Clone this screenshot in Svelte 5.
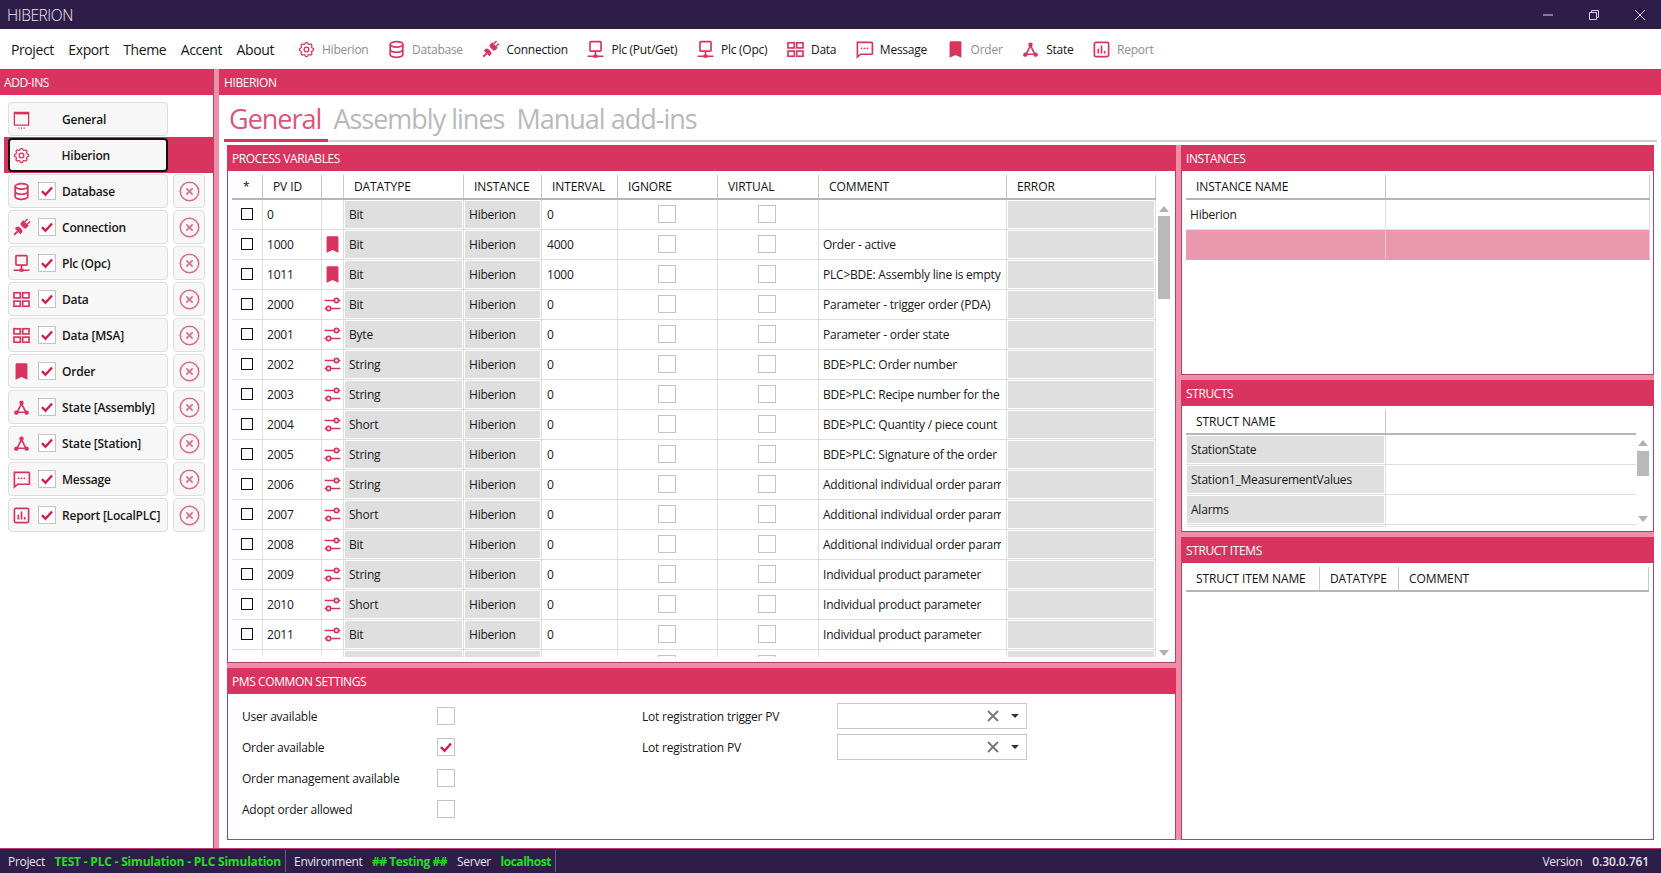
<script>
  const menus = ['Project', 'Export', 'Theme', 'Accent', 'About'];
  const tools = [
    ['gear', 'Hiberion', true], ['db', 'Database', true], ['plug', 'Connection', false],
    ['pc', 'Plc (Put/Get)', false], ['pc', 'Plc (Opc)', false], ['grid', 'Data', false],
    ['msg', 'Message', false], ['mark', 'Order', true], ['state', 'State', false], ['chart', 'Report', true]
  ];
  const addins = [
    ['screen', 'General', false], ['gear', 'Hiberion', false], ['db', 'Database', true],
    ['plug', 'Connection', true], ['pc', 'Plc (Opc)', true], ['grid', 'Data', true],
    ['grid', 'Data [MSA]', true], ['mark', 'Order', true], ['state', 'State [Assembly]', true],
    ['state', 'State [Station]', true], ['msg', 'Message', true], ['chart', 'Report [LocalPLC]', true]
  ];
  const add = 'Additional individual order parameter';
  const ind = 'Individual product parameter';
  const rows = [
    ['0', '', 'Bit', '0', ''],
    ['1000', 'mark', 'Bit', '4000', 'Order - active'],
    ['1011', 'mark', 'Bit', '1000', 'PLC>BDE: Assembly line is empty'],
    ['2000', 'sliders', 'Bit', '0', 'Parameter - trigger order (PDA)'],
    ['2001', 'sliders', 'Byte', '0', 'Parameter - order state'],
    ['2002', 'sliders', 'String', '0', 'BDE>PLC: Order number'],
    ['2003', 'sliders', 'String', '0', 'BDE>PLC: Recipe number for the order'],
    ['2004', 'sliders', 'Short', '0', 'BDE>PLC: Quantity / piece count'],
    ['2005', 'sliders', 'String', '0', 'BDE>PLC: Signature of the order'],
    ['2006', 'sliders', 'String', '0', add],
    ['2007', 'sliders', 'Short', '0', add],
    ['2008', 'sliders', 'Bit', '0', add],
    ['2009', 'sliders', 'String', '0', ind],
    ['2010', 'sliders', 'Short', '0', ind],
    ['2011', 'sliders', 'Bit', '0', ind],
    ['', 'sliders', '', '', '']
  ];
  const headers = ['*', 'PV ID', '', 'DATATYPE', 'INSTANCE', 'INTERVAL', 'IGNORE', 'VIRTUAL', 'COMMENT', 'ERROR'];
  const structs = ['StationState', 'Station1_MeasurementValues', 'Alarms', ''];
  const settings = [
    ['User available', false], ['Order available', true],
    ['Order management available', false], ['Adopt order allowed', false]
  ];
</script>

{#snippet icon(name)}
  <svg class="icon" viewBox="0 0 24 24" aria-hidden="true">
    {#if name === 'gear'}
      <path class="s" d="M10.325 4.317c.426 -1.756 2.924 -1.756 3.35 0a1.724 1.724 0 0 0 2.573 1.066c1.543 -.94 3.31 .826 2.37 2.37a1.724 1.724 0 0 0 1.065 2.572c1.756 .426 1.756 2.924 0 3.35a1.724 1.724 0 0 0 -1.066 2.573c.94 1.543 -.826 3.31 -2.37 2.37a1.724 1.724 0 0 0 -2.572 1.065c-.426 1.756 -2.924 1.756 -3.35 0a1.724 1.724 0 0 0 -2.573 -1.066c-1.543 .94 -3.31 -.826 -2.37 -2.37a1.724 1.724 0 0 0 -1.065 -2.572c-1.756 -.426 -1.756 -2.924 0 -3.35a1.724 1.724 0 0 0 1.066 -2.573c-.94 -1.543 .826 -3.31 2.37 -2.37c1 .608 2.296 .07 2.572 -1.065z"/>
      <circle class="s" cx="12" cy="12" r="3"/>
    {:else if name === 'db'}
      <ellipse class="s w" cx="12" cy="5.5" rx="8" ry="3.5"/>
      <path class="s w" d="M4 5.5v13c0 1.9 3.6 3.5 8 3.5s8-1.6 8-3.5v-13M4 12c0 1.9 3.6 3.5 8 3.5s8-1.6 8-3.5"/>
    {:else if name === 'plug'}
      <g class="f" transform="rotate(45 12 12)">
        <rect x="8.8" y="-1" width="1.9" height="5"/><rect x="13.3" y="-1" width="1.9" height="5"/>
        <path d="M7 4h10v3.5a3 3 0 0 1-3 3h-4a3 3 0 0 1-3-3z"/>
        <path d="M7 19v-2.5a3 3 0 0 1 3-3h4a3 3 0 0 1 3 3V19z"/>
        <rect x="10.8" y="19" width="2.4" height="6"/>
      </g>
    {:else if name === 'pc'}
      <rect class="s w" x="5" y="2" width="14" height="12" rx="1"/>
      <path class="s w" d="M12 14v6M2 20.5h20"/><rect class="f" x="9.5" y="18.5" width="5" height="4"/>
    {:else if name === 'grid'}
      <rect class="s w" x="2.5" y="3.5" width="8" height="6.5"/><rect class="s w" x="13.5" y="3.5" width="8" height="6.5"/>
      <rect class="s w" x="2.5" y="14" width="8" height="6.5"/><rect class="s w" x="13.5" y="14" width="8" height="6.5"/>
    {:else if name === 'msg'}
      <path class="s w" d="M3 3h18a1 1 0 0 1 1 1v13a1 1 0 0 1-1 1H7l-4 3.5z"/>
      <circle class="f" cx="8.5" cy="10.5" r="1.1"/><circle class="f" cx="12" cy="10.5" r="1.1"/><circle class="f" cx="15.5" cy="10.5" r="1.1"/>
    {:else if name === 'mark'}
      <path class="f" d="M6 1.5h12a1.5 1.5 0 0 1 1.5 1.5v19.5L12 19l-7.5 3.5V3A1.5 1.5 0 0 1 6 1.5z"/>
    {:else if name === 'state'}
      <path class="s w" d="M12 7 6.5 18h11z"/>
      <circle class="f" cx="12" cy="6" r="2.8"/><circle class="f" cx="5.5" cy="18.5" r="2.8"/><circle class="f" cx="18.5" cy="18.5" r="2.8"/>
    {:else if name === 'chart'}
      <rect class="s w" x="3" y="3" width="18" height="18" rx="2"/>
      <path class="s w" d="M8 17v-6M12 17V7M16 17v-3"/>
    {:else if name === 'sliders'}
      <path class="s w" d="M2 7h12M20 7h2M2 17h2M10 17h12"/>
      <circle class="s w" cx="17" cy="7" r="2.7"/><circle class="s w" cx="7" cy="17" r="2.7"/>
    {:else if name === 'screen'}
      <path class="s" d="M3 3h18v16H3z"/><path class="s w" d="M3 4.5h18"/>
      <path class="s" d="M8 23h1.5M11.3 23h1.5M14.6 23h1.5"/>
    {/if}
  </svg>
{/snippet}

{#snippet check(on, cls)}
  <span class="check {cls}">
    {#if on}
      <svg viewBox="0 0 16 16" aria-hidden="true"><path d="M3 8.2 6.5 11.8 13 4.5"/></svg>
    {/if}
  </span>
{/snippet}

<div class="app">
  <header class="title">
    <span class="title-text">HIBERION</span>
    <div class="win">
      <svg viewBox="0 0 10 10" aria-hidden="true"><path d="M0 5h10"/></svg>
      <svg viewBox="0 0 10 10" aria-hidden="true"><path d="M.5 2.5h7v7h-7zM2.5 2.5v-2h7v7h-2"/></svg>
      <svg viewBox="0 0 10 10" aria-hidden="true"><path d="M0 0l10 10M10 0 0 10"/></svg>
    </div>
  </header>

  <nav class="menu">
    <div class="menus">
      {#each menus as m}<span>{m}</span>{/each}
    </div>
    <div class="tools">
      {#each tools as [ic, label, off]}
        <span class="tool" class:off>{@render icon(ic)}<span>{label}</span></span>
      {/each}
    </div>
  </nav>

  <div class="body">
    <aside class="side">
      <div class="bar">ADD-INS</div>
      <div class="addins">
        {#each addins as [ic, label, removable]}
          <div class="addin" class:active={label === 'Hiberion'}>
            <div class="btn">
              <span class="btn-icon">{@render icon(ic)}</span>
              <span class="btn-check">{#if removable}{@render check(true, '')}{/if}</span>
              <span class="btn-label">{label}</span>
            </div>
            {#if removable}
              <div class="remove">
                <svg viewBox="0 0 20 20" aria-hidden="true"><circle cx="10" cy="10" r="8.8"/><path d="M7 7l6 6M13 7l-6 6"/></svg>
              </div>
            {/if}
          </div>
        {/each}
      </div>
    </aside>
    <div class="splitter"></div>
    <main class="main">
      <div class="bar">HIBERION</div>
      <div class="tabs">
        <span class="tab current">General</span>
        <span class="tab">Assembly lines</span>
        <span class="tab">Manual add-ins</span>
      </div>
      <div class="work">
        <div class="col-left">
          <section class="panel">
            <div class="bar">PROCESS VARIABLES</div>
            <div class="pane pv-pane">
              <div class="pv-table">
                <div class="pv-grid head">
                  {#each headers as h, i}<div class="hcell" class:star={i === 0}>{h}</div>{/each}
                </div>
                <div class="pv-rows">
                  {#each rows as [id, ic, type, interval, comment]}
                    <div class="pv-grid row">
                      <div class="cell center">{@render check(false, 'black')}</div>
                      <div class="cell txt">{id}</div>
                      <div class="cell center mini">{#if ic}{@render icon(ic)}{/if}</div>
                      <div class="cell"><div class="fill">{type}</div></div>
                      <div class="cell"><div class="fill">{id ? 'Hiberion' : ''}</div></div>
                      <div class="cell txt intv">{interval}</div>
                      <div class="cell center nudge">{@render check(false, '')}</div>
                      <div class="cell center nudge">{@render check(false, '')}</div>
                      <div class="cell txt"><div class="clip">{comment}</div></div>
                      <div class="cell"><div class="fill"></div></div>
                    </div>
                  {/each}
                </div>
              </div>
              <div class="scroll pv-scroll">
                <i class="up"></i><b></b><i class="down"></i>
              </div>
            </div>
          </section>
          <section class="panel">
            <div class="bar">PMS COMMON SETTINGS</div>
            <div class="pane pms">
              <div class="pms-left">
                {#each settings as [label, on]}
                  <div class="pms-row"><span>{label}</span>{@render check(on, '')}</div>
                {/each}
              </div>
              <div class="pms-right">
                {#each ['Lot registration trigger PV', 'Lot registration PV'] as label}
                  <div class="pms-row2">
                    <span>{label}</span>
                    <div class="combo">
                      <svg class="clear" viewBox="0 0 12 12" aria-hidden="true"><path d="M1 1l10 10M11 1 1 11"/></svg>
                      <i class="caret"></i>
                    </div>
                  </div>
                {/each}
              </div>
            </div>
          </section>
        </div>
        <div class="col-right">
          <section class="panel">
            <div class="bar">INSTANCES</div>
            <div class="pane side-pane">
              <div class="two w464 head"><div class="hcell">INSTANCE NAME</div><div class="hcell"></div></div>
              <div class="two w464 row"><div class="cell txt">Hiberion</div><div class="cell"></div></div>
              <div class="two w464 row selected"><div class="cell"></div><div class="cell"></div></div>
            </div>
          </section>
          <section class="panel">
            <div class="bar">STRUCTS</div>
            <div class="pane side-pane struct-pane">
              <div class="struct-table">
                <div class="two head"><div class="hcell">STRUCT NAME</div><div class="hcell none"></div></div>
                <div class="struct-rows">
                  {#each structs as s}
                    <div class="two row"><div class="cell"><div class="fill">{s}</div></div><div class="cell none"></div></div>
                  {/each}
                </div>
              </div>
              <div class="scroll struct-scroll"><i class="up"></i><b></b><i class="down"></i></div>
            </div>
          </section>
          <section class="panel">
            <div class="bar">STRUCT ITEMS</div>
            <div class="pane side-pane">
              <div class="three head">
                <div class="hcell">STRUCT ITEM NAME</div><div class="hcell">DATATYPE</div><div class="hcell">COMMENT</div>
              </div>
            </div>
          </section>
        </div>
      </div>
    </main>
  </div>

  <footer class="status">
    <span>Project</span><em class="wide">TEST - PLC - Simulation - PLC Simulation</em>
    <span class="sep"></span>
    <span>Environment</span><em>## Testing ##</em>
    <span>Server</span><em>localhost</em>
    <span class="sep"></span>
    <span class="version">Version</span><strong>0.30.0.761</strong>
  </footer>
</div>

<style>
  :global(body) { margin: 0; background: #fff; }
  .app {
    --accent: #d8345f;
    --pink: #ee8fa8;
    --edge: #b63f68;
    --ink: #161616;
    width: 1661px; height: 873px; overflow: hidden;
    display: flex; flex-direction: column;
    font-family: "Open Sans", "Noto Sans", sans-serif;
    font-size: 12px; color: var(--ink); letter-spacing: -0.22px;
  }
  .icon { width: 100%; height: 100%; display: block; }
  .s { fill: none; stroke: var(--accent); stroke-width: 1.6; }
  .w { stroke-width: 2.1; }
  .f { fill: var(--accent); stroke: none; }

  .title {
    height: 29px; flex: none; background: #2d1d48; color: #f0ebf5;
    display: flex; align-items: center; justify-content: space-between;
    padding: 0 16px 0 7px;
  }
  .title-text { font-size: 15.5px; font-weight: 300; letter-spacing: -0.45px; }
  .win { display: flex; gap: 36px; }
  .win svg { width: 10px; height: 10px; fill: none; stroke: #ddd2ee; stroke-width: 1; }

  .menu { height: 40px; flex: none; display: flex; align-items: center; background: #fff; }
  .menus { display: flex; gap: 14.5px; padding-left: 11px; font-size: 14px; width: 297px; box-sizing: border-box; letter-spacing: -0.4px; }
  .tools { display: flex; gap: 18.6px; letter-spacing: -0.25px; }
  .tool { display: flex; align-items: center; gap: 6px; font-size: 12px; }
  .tool :global(.icon) { width: 19px; height: 19px; }
  .tool.off span { color: #8e8e8e; }

  .body { flex: 1; min-height: 0; display: flex; }
  .bar {
    height: 26px; flex: none; background: var(--accent); color: #fff;
    display: flex; align-items: center; padding-left: 5px; font-size: 12px;
    letter-spacing: -0.4px; box-sizing: border-box; font-weight: 400;
  }
  .side { width: 213px; flex: none; display: flex; flex-direction: column; }
  .side > .bar { padding-left: 4px; }
  .splitter { width: 6px; flex: none; box-sizing: border-box; background: var(--pink); border: solid var(--edge); border-width: 0 0 0 1px; }
  .addins { padding-top: 7px; display: flex; flex-direction: column; gap: 2px; font-weight: 600; }
  .addin { display: flex; gap: 5px; margin-left: 8px; height: 34px; width: 197px; }
  .addin.active {
    margin: -1px 0 -1px 4px; padding: 1px 0 1px 4px; width: 205px;
    background: var(--accent); box-sizing: content-box;
  }
  .btn {
    width: 160px; box-sizing: border-box; background: #f7f7f7; border: 1px solid #dedede;
    border-radius: 4px; display: grid; grid-template-columns: 29px 24px 1fr; align-items: center;
  }
  .active .btn { border: 2.5px solid #111; grid-template-columns: 27.5px 24px 1fr; }
  .btn-icon { width: 19px; height: 19px; margin-left: 3px; }
  .active .btn-icon { margin-left: 1.5px; }
  .btn-check { display: flex; height: 18px; }
  .remove {
    width: 32px; box-sizing: border-box; background: #f7f7f7; border: 1px solid #dedede; border-radius: 4px;
    display: flex; align-items: center; justify-content: center;
  }
  .remove svg { width: 21px; height: 21px; fill: none; stroke: #de6a8a; stroke-width: 1.5; }
  .check {
    width: 18px; height: 18px; box-sizing: border-box; background: #fff; border: 1px solid #c4c4c4;
    display: inline-block; flex: none;
  }
  .check svg { width: 16px; height: 16px; display: block; fill: none; stroke: #cf1f52; stroke-width: 2.4; }
  .check.black { width: 12px; height: 12px; border: 1.3px solid #111; }

  .main { flex: 1; min-width: 0; display: flex; flex-direction: column; }
  .tabs {
    height: 47px; flex: none; box-sizing: border-box; margin: 0 4px 0 5px;
    border-bottom: 2px solid #cfcfcf; display: flex; align-items: flex-end;
    font-size: 27px; color: #b9b9b9; letter-spacing: -1px;
  }
  .tab { height: 47px; box-sizing: border-box; margin-bottom: -2px; padding: 3px 7px 0 5px; line-height: 42px; }
  .tab.current { color: #d9577c; border-bottom: 3px solid var(--accent); }
  .work {
    flex: 1; min-height: 0; margin: 3px 7px 8px 8px; background: var(--pink);
    display: grid; grid-template-columns: 949px 1fr; gap: 5px;
  }
  .col-left { display: grid; grid-template-rows: 518px 1fr; gap: 5px; min-height: 0; }
  .col-right { display: grid; grid-template-rows: 230px 152px 1fr; gap: 5px; min-height: 0; }
  .panel { display: flex; flex-direction: column; min-height: 0; background: #fff; }
  .pane { flex: 1; min-height: 0; border: 1px solid var(--edge); border-top: 0; overflow: hidden; }

  .pv-pane { display: flex; padding: 4px 0 0 4px; }
  .pv-table { width: 924px; flex: none; }
  .pv-grid { display: grid; grid-template-columns: 31px 59px 22px 120px 78px 76px 100px 101px 188px 149px; }
  .head { height: 25px; box-sizing: border-box; border-bottom: 2px solid #b5b5b5; font-weight: 500; }
  .hcell {
    border-right: 1px solid #c9c9c9; padding-left: 10px; line-height: 23px; height: 23px;
    white-space: nowrap; overflow: hidden; letter-spacing: -0.1px; color: #111;
  }
  .hcell.star { padding-left: 11px; }
  .hcell.none { border-right: 0; }
  .pv-rows { height: 457px; overflow: hidden; }
  .row { height: 30px; box-sizing: border-box; border-bottom: 1px solid #dedede; font-weight: 500; }
  .cell { min-width: 0; border-right: 1px solid #dedede; padding: 1px; box-sizing: border-box; height: 29px; }
  .cell.none { border-right: 0; }
  .cell.txt { padding: 0 5px 0 4px; line-height: 29px; }
  .cell.intv { padding-left: 5px; }
  .clip { overflow: hidden; white-space: nowrap; }
  .cell.center { display: flex; align-items: center; justify-content: center; padding: 0 0 1px; }
  .cell.nudge { padding-right: 2px; }
  .cell.mini :global(.icon) { width: 19px; height: 19px; }
  .fill {
    height: 27px; background: #dfdfdf; padding-left: 4px; line-height: 27px;
    white-space: nowrap; overflow: hidden;
  }

  .scroll { width: 12px; flex: none; display: flex; flex-direction: column; align-items: center; }
  .scroll b { width: 12px; background: #b9b9b9; display: block; }
  .scroll i { width: 0; height: 0; border-left: 5px solid transparent; border-right: 5px solid transparent; }
  .scroll .up { border-bottom: 6px solid #b0b0b0; }
  .scroll .down { border-top: 6px solid #b0b0b0; margin-top: auto; }
  .pv-scroll { margin-left: 2px; padding: 31px 0 6px; }
  .pv-scroll b { height: 83px; margin-top: 4px; }

  .pms { display: flex; padding: 7px 0 0 14px; font-weight: 500; }
  .pms-left { width: 400px; display: flex; flex-direction: column; }
  .pms-row { width: 213px; height: 31px; display: flex; align-items: center; justify-content: space-between; }
  .pms-row .check { margin-top: -2px; }
  .pms-row2 { width: 385px; height: 31px; display: flex; align-items: center; justify-content: space-between; }
  .combo {
    width: 190px; height: 26px; box-sizing: border-box; border: 1px solid #c8c8c8; margin-top: -1px;
    display: flex; align-items: center; justify-content: flex-end; gap: 12px; padding: 0 7px 1px 0;
  }
  .clear { width: 12px; height: 12px; fill: none; stroke: #777; stroke-width: 1.8; }
  .caret { width: 0; height: 0; border-left: 4px solid transparent; border-right: 4px solid transparent; border-top: 4px solid #333; }

  .side-pane { padding: 4px 0 0 4px; }
  .two { display: grid; grid-template-columns: 200px 1fr; }
  .w464 { width: 464px; }
  .w464 .hcell:last-child { border-right: 1px solid #c9c9c9; }
  .selected { background: #ea98ae; border-bottom-color: #ea98ae; }
  .selected .cell { border-right-color: #f4c6d2; }
  .struct-pane { display: flex; }
  .struct-table { width: 450px; flex: none; }
  .struct-rows { height: 92px; overflow: hidden; }
  .struct-scroll { margin-left: 1px; padding: 30px 0 9px; }
  .struct-scroll b { height: 25px; margin-top: 5px; }
  .three { display: grid; grid-template-columns: 134px 79px 250px; width: 463px; }
  .three .hcell:nth-child(3) { border-right: 1px solid #c9c9c9; }

  .status {
    height: 25px; flex: none; box-sizing: border-box; background: #2d1d48; color: #e8e4ef;
    border-top: 1px solid var(--edge); display: flex; align-items: center; padding-left: 8px;
    font-size: 12px; letter-spacing: -0.32px;
  }
  .status em { font-style: normal; font-weight: 700; color: #20e020; margin: 0 10px 0 9.5px; letter-spacing: -0.45px; }
  .status em.wide { letter-spacing: -0.2px; }
  .sep { width: 1px; height: 22px; background: #6a5c80; margin: 0 8px 0 -6px; }
  .version { margin-left: auto; margin-right: 10px; }
  .status strong { font-weight: 600; margin-right: 12px; letter-spacing: -0.12px; }
</style>
